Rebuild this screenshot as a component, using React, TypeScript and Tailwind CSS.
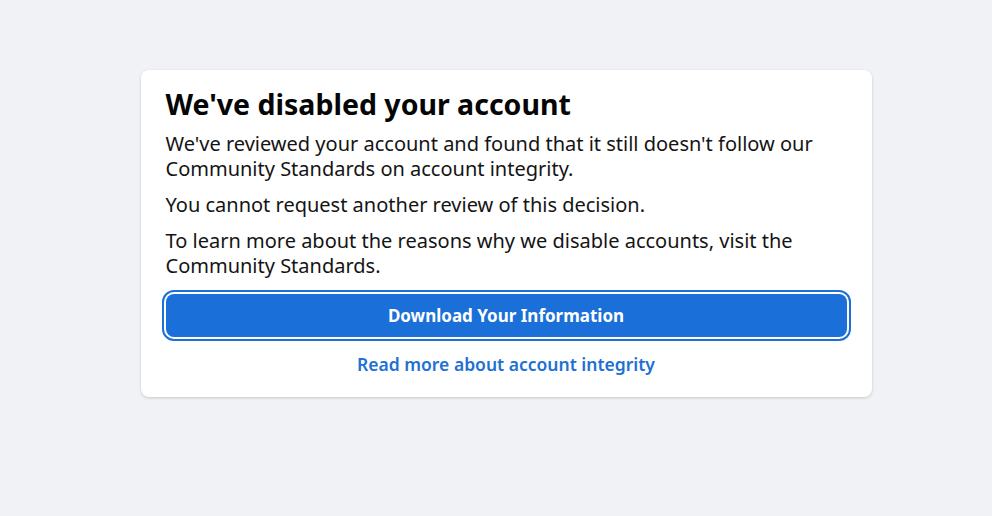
export default function App() {
  return (
    <div
      className="min-h-screen w-full bg-[#f0f2f5] flex justify-center pl-5 pt-[70px]"
      style={{ fontFamily: '"Noto Sans", "Open Sans", sans-serif' }}
    >
      <div className="w-[731px] h-fit bg-white rounded-lg shadow-[0_1px_3px_rgba(0,0,0,0.18)] px-[25px] pt-[17px] pb-[20px]">
        {/* Title */}
        <h1 className="text-[28.5px] font-bold leading-[34px] text-[#050505]">
          We've disabled your account
        </h1>

        {/* Body */}
        <div className="mt-[10px] flex flex-col gap-[11px] text-[20px] leading-[25px] text-[#141414]">
          <p>
            We've reviewed your account and found that it still doesn't follow
            our Community Standards on account integrity.
          </p>
          <p>You cannot request another review of this decision.</p>
          <p>
            To learn more about the reasons why we disable accounts, visit the
            Community Standards.
          </p>
        </div>

        {/* Actions */}
        <button className="mt-[16px] w-full h-[43px] rounded-lg bg-[#1b6fd9] text-white text-[17px] font-bold outline-2 outline-offset-2 outline-[#1b6fd9]">
          Download Your Information
        </button>
        <div className="mt-4 text-center">
          <a className="text-[17.5px] leading-[22px] font-semibold text-[#2170d3]">
            Read more about account integrity
          </a>
        </div>
      </div>
    </div>
  );
}
